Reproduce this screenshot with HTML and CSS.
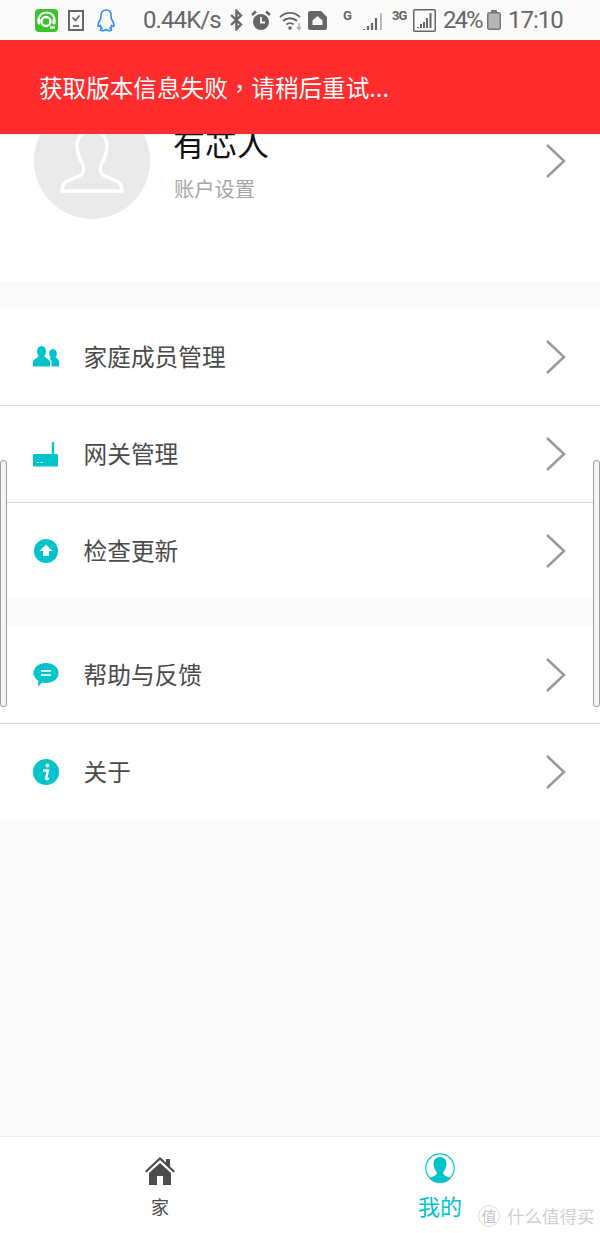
FILE: index.html
```html
<!DOCTYPE html>
<html lang="zh-CN">
<head>
    <meta charset="UTF-8">
    <meta name="viewport" content="width=device-width, initial-scale=1.0">
    <title>我的</title>
    <link rel="stylesheet" href="styles.css">
</head>
<body>
<div class="page">
    <!-- phone status bar -->
    <div class="status">
        <svg class="st-app" width="23" height="23" viewBox="0 0 23 23"><rect width="23" height="23" rx="4" fill="#38c52b"/><path d="M3.500 12.500C3 7 6.500 3.500 11.500 3.500s8.500 3.500 8 9" fill="none" stroke="#fff" stroke-width="2"/><rect x="2.500" y="9.500" width="3" height="6" rx="1.500" fill="#fff"/><rect x="17.500" y="9.500" width="3" height="6" rx="1.500" fill="#fff"/><circle cx="11" cy="12.500" r="4.500" fill="none" stroke="#fff" stroke-width="2.400"/><path d="M15 18.500h5" stroke="#fff" stroke-width="2.400"/></svg>
        <svg class="st-task" width="16" height="21" viewBox="0 0 16 21"><rect x="1" y="1" width="14" height="19" fill="none" stroke="#666" stroke-width="2"/><path d="M4.500 7.500l3 3 4-5" fill="none" stroke="#666" stroke-width="1.600"/><path d="M5 16h6" stroke="#666" stroke-width="1.800"/></svg>
        <svg class="st-qq" width="18" height="23" viewBox="0 0 18 23"><path d="M9 1C5.500 1 3.800 3.800 3.800 7v2.500C2.300 11.500 1 14 1 16.500c0 1.300.8 1.500 2.400.2.300 1 .9 1.800 1.600 2.400-1.400.6-1.800 1.300-1.400 2 .9.900 4 .6 5.400-.5 1.400 1.100 4.500 1.400 5.400.5.400-.7 0-1.400-1.400-2 .7-.6 1.300-1.400 1.600-2.400 1.600 1.300 2.400 1.100 2.400-.2 0-2.500-1.300-5-2.800-7V7C14.200 3.800 12.500 1 9 1z" fill="none" stroke="#2f8ef0" stroke-width="1.600"/></svg>
        <span class="st-speed">0.44K/s</span>
        <svg class="st-bt" width="15" height="22" viewBox="0 0 15 22"><path d="M2 6l10 9.500L7.500 20V2L12 6.500 2 16" fill="none" stroke="#666" stroke-width="2.400"/></svg>
        <svg class="st-alarm" width="20" height="21" viewBox="0 0 20 21"><circle cx="10" cy="12" r="8" fill="#666"/><path d="M10 7v5.500h4" fill="none" stroke="#fafafa" stroke-width="1.800"/><path d="M1 5l4-3.500M19 5l-4-3.500" stroke="#666" stroke-width="2.600"/></svg>
        <svg class="st-wifi" width="24" height="21" viewBox="0 0 24 21"><path d="M1 7c6-5.500 14-5.500 20 0M4 11c4-3.700 10-3.700 14 0M7.500 14.500c2-1.800 5-1.800 7 0" fill="none" stroke="#666" stroke-width="1.900"/><circle cx="11" cy="18" r="1.800" fill="#666"/><path d="M20 13v6M18 17l2 2.500 2-2.500" fill="none" stroke="#aaa" stroke-width="1.300"/></svg>
        <svg class="st-sim" width="19" height="19" viewBox="0 0 19 19"><path d="M2 0h11l6 6v11a2 2 0 0 1-2 2H2a2 2 0 0 1-2-2V2a2 2 0 0 1 2-2z" fill="#666"/><path d="M9.500 5L4.500 9.500V14h10V9.500z" fill="#fafafa"/></svg>
        <span class="st-net st-g">G</span>
        <svg class="st-sig" width="20" height="18" viewBox="0 0 20 18"><path d="M1 17v-1M5 17v-4M9 17v-7M13 17V5" stroke="#666" stroke-width="2.200"/><path d="M18 17V0" stroke="#bbb" stroke-width="2"/></svg>
        <span class="st-net st-3g">3G</span>
        <svg class="st-sigbox" width="23" height="23" viewBox="0 0 23 23"><rect x=".75" y=".75" width="21.500" height="21.500" rx="1" fill="none" stroke="#666" stroke-width="1.500"/><path d="M5 19v-1M8 19v-4M11 19v-6M14 19V9M17.500 19V4" stroke="#666" stroke-width="2"/></svg>
        <span class="st-batt">24%</span>
        <svg class="st-battery" width="14" height="20" viewBox="0 0 14 20"><path d="M4 0h6v2H4z" fill="#777"/><rect x=".75" y="2.750" width="12.500" height="16.500" rx="1.500" fill="#b5b5b5" stroke="#777" stroke-width="1.500"/></svg>
        <span class="st-time">17:10</span>
    </div>

    <!-- toast sits over the profile block -->
    <div class="toast">获取版本信息失败<span class="comma" lang="zh-TW">，</span>请稍后重试...</div>

    <div class="profile">
        <div class="avatar">
            <svg width="64" height="64" viewBox="0 0 64 64"><path d="M32 2C23 2 17 8 17 17C17 24 19 28 21 32C24 37 25 43 21 46C16 49 10 50 6 53C3 55 2 58 2 62H62C62 58 61 55 58 53C54 50 48 49 43 46C39 43 40 37 43 32C45 28 47 24 47 17C47 8 41 2 32 2Z" fill="none" stroke="#fff" stroke-width="3.400"/></svg>
        </div>
        <div class="info">
            <div class="name">有芯人</div>
            <div class="sub">账户设置</div>
        </div>
        <svg class="arrow" width="22" height="36" viewBox="0 0 22 36"><path d="M2 2l17 16L2 34" fill="none" stroke="#999" stroke-width="2.500"/></svg>
    </div>

    <div class="group">
        <div class="row">
            <svg class="ico" width="26" height="21" viewBox="0 0 26 21"><ellipse cx="8.500" cy="5.500" rx="4.500" ry="5.500" fill="#00c4cc"/><path d="M0 20.500V16C0 13 5 12.500 6 9.500H11C12 12.500 17 13 17 16V20.500z" fill="#00c4cc"/><ellipse cx="20" cy="7.500" rx="3.800" ry="4.500" fill="#00c4cc"/><path d="M18.500 20.500V15.500C18.500 14 17.500 13.500 16 12.500C17.500 12.500 18 11 18 10.500H22.500C23 12.500 26 13 26 15.500V20.500z" fill="#00c4cc"/></svg>
            <span class="label">家庭成员管理</span>
            <svg class="arrow" width="22" height="36" viewBox="0 0 22 36"><path d="M2 2l17 16L2 34" fill="none" stroke="#999" stroke-width="2.500"/></svg>
        </div>
        <div class="row">
            <svg class="ico" width="26" height="25" viewBox="0 0 26 25"><rect x="18.800" width="2.400" height="13" rx="1" fill="#00c4cc"/><rect y="12" width="25" height="12.500" rx="1" fill="#00c4cc"/><path d="M4 20.500h2M7.500 20.500h2" stroke="#fff" stroke-width="1.200"/></svg>
            <span class="label">网关管理</span>
            <svg class="arrow" width="22" height="36" viewBox="0 0 22 36"><path d="M2 2l17 16L2 34" fill="none" stroke="#999" stroke-width="2.500"/></svg>
        </div>
        <div class="row">
            <svg class="ico" width="26" height="24" viewBox="0 0 26 24"><circle cx="13" cy="12" r="12" fill="#00c4cc"/><path d="M13 5.500l6.500 6.500h-3.500v5h-6v-5H6.500z" fill="#fff"/></svg>
            <span class="label">检查更新</span>
            <svg class="arrow" width="22" height="36" viewBox="0 0 22 36"><path d="M2 2l17 16L2 34" fill="none" stroke="#999" stroke-width="2.500"/></svg>
        </div>
    </div>

    <div class="group">
        <div class="row">
            <svg class="ico" width="26" height="24" viewBox="0 0 26 24"><path d="M13 0c7 0 12.500 4.300 12.500 10S20 20 13 20c-1.500 0-3-.2-4-.5L5 24l.5-6C2.500 16 .5 13.300.5 10 .5 4.300 6 0 13 0z" fill="#00c4cc"/><path d="M8 7.800h10M8 12.200h10" stroke="#fff" stroke-width="1.800"/></svg>
            <span class="label">帮助与反馈</span>
            <svg class="arrow" width="22" height="36" viewBox="0 0 22 36"><path d="M2 2l17 16L2 34" fill="none" stroke="#999" stroke-width="2.500"/></svg>
        </div>
        <div class="row">
            <svg class="ico" width="26" height="26" viewBox="0 0 26 26"><circle cx="13" cy="13" r="13" fill="#00c4cc"/><circle cx="14.500" cy="6.500" r="2" fill="#fff"/><path d="M10 11.500h5l-2 8c0 1 1.500 1 3-.5" fill="none" stroke="#fff" stroke-width="2.400"/></svg>
            <span class="label">关于</span>
            <svg class="arrow" width="22" height="36" viewBox="0 0 22 36"><path d="M2 2l17 16L2 34" fill="none" stroke="#999" stroke-width="2.500"/></svg>
        </div>
    </div>

    <div class="tabs">
        <div class="tab">
            <svg width="30" height="30" viewBox="0 0 30 30"><path d="M0 15L15 1l6 5.500V3h4v7.500l5 4.500-1.500 1.500L15 4 1.500 16.500z" fill="#4c4c4c"/><path d="M4 17L15 7l11 10v12h-8v-9h-6v9H4z" fill="#4c4c4c"/></svg>
            <span class="tab-text">家</span>
        </div>
        <div class="tab active">
            <svg width="30" height="30" viewBox="0 0 30 30"><circle cx="15" cy="15" r="14.200" fill="#fff" stroke="#00c4cc" stroke-width="1.200"/><path d="M15 4c-4 0-6.500 3-6.500 7 0 3 1.500 6 3 8 1 1.500-.5 3-2.500 4-2 1-3.500 1.500-4.500 2.500a14 14 0 0 0 21 0c-1-1-2.500-1.500-4.500-2.500-2-1-3.500-2.500-2.500-4 1.500-2 3-5 3-8 0-4-2.500-7-6.500-7z" fill="#00c4cc"/></svg>
            <span class="tab-text">我的</span>
        </div>
    </div>

    <!-- overlays: scroll handles and image watermark -->
    <div class="handle handle-l"></div>
    <div class="handle handle-r"></div>
    <div class="mark">
        <span class="mark-logo">值</span>
        <span class="mark-text">什么值得买</span>
    </div>
</div>
</body>
</html>
```

FILE: styles.css
```css
html, body {
    margin: 0;
    padding: 0;
}

body {
    font-family: "Noto Sans CJK SC", "Noto Sans", sans-serif;
    background: #fafafa;
}

.page {
    position: relative;
    width: 600px;
    height: 1233px;
    overflow: hidden;
    display: flex;
    flex-direction: column;
    background: #fafafa;
}

/* status bar */
.status {
    height: 40px;
    flex: none;
    display: flex;
    align-items: center;
    padding-left: 35px;
    font-family: Roboto, sans-serif;
    color: #666;
    background: #fafafa;
}

.st-task { margin-left: 10px; }
.st-qq { margin-left: 13px; }
.st-speed { margin-left: 28px; font-size: 24px; width: 78px; white-space: nowrap; letter-spacing: -.9px; }
.st-bt { margin-left: 8px; }
.st-alarm { margin-left: 7px; }
.st-wifi { margin-left: 8px; }
.st-sim { margin-left: 5px; }
.st-net { font-size: 13px; font-weight: bold; align-self: flex-start; margin-top: 9px; line-height: 14px; }
.st-g { margin-left: 16px; width: 9px; }
.st-sig { margin-left: 11px; margin-top: 3px; }
.st-3g { margin-left: 9px; width: 15px; white-space: nowrap; letter-spacing: -1px; }
.st-sigbox { margin-left: 6px; }
.st-batt { margin-left: 7px; font-size: 24px; width: 39px; letter-spacing: -2px; white-space: nowrap; }
.st-battery { margin-left: 5px; }
.st-time { margin-left: 7px; font-size: 24px; letter-spacing: -1px; }

/* red toast */
.toast {
    position: absolute;
    left: 0;
    top: 40px;
    width: 561px;
    height: 94px;
    padding-left: 39px;
    line-height: 94px;
    font-size: 23.600px;
    color: #fff;
    background: #ff2d2d;
}

.comma {
    font-family: "Noto Sans CJK TC", sans-serif;
}

/* profile */
.profile {
    flex: none;
    height: 241px;
    box-sizing: border-box;
    padding: 63px 34px 0;
    display: flex;
    align-items: flex-start;
    background: #fff;
}

.avatar {
    width: 116px;
    height: 116px;
    border-radius: 50%;
    background: #eaeaea;
    display: flex;
    align-items: center;
    justify-content: center;
    flex: none;
}

.info {
    margin-left: 24px;
    margin-top: 19px;
    flex: 1;
}

.name {
    font-size: 32px;
    line-height: 40px;
    margin-left: -1px;
    color: #111;
}

.sub {
    margin-top: 12px;
    font-size: 20.300px;
    line-height: 28px;
    color: #a6a6a6;
}

.profile .arrow {
    margin-top: 40px;
    margin-right: -1px;
}

/* list */
.group {
    flex: none;
    margin-top: 27px;
    background: #fff;
}

.row {
    height: 97px;
    box-sizing: border-box;
    display: flex;
    align-items: center;
    padding: 0 33px;
    border-top: 1px solid #d5d5d5;
}

.row:first-child {
    border-top: none;
}

.ico {
    flex: none;
}

.label {
    flex: 1;
    margin-left: 24.500px;
    padding-bottom: 2px;
    font-size: 23.700px;
    color: #4a4a4a;
}

/* bottom tabs */
.tabs {
    margin-top: auto;
    height: 97px;
    flex: none;
    display: flex;
    padding: 0 20px;
    background: #fff;
    border-top: 1px solid #f0f0f0;
    box-sizing: border-box;
}

.tab {
    flex: 1;
    display: flex;
    flex-direction: column;
    align-items: center;
    padding-top: 19px;
    color: #4a4a4a;
}

.tab-text {
    margin-top: 7px;
    font-size: 18px;
    line-height: 26px;
}

.tab.active {
    color: #00c4cc;
    padding-top: 16px;
}

.tab.active .tab-text {
    font-size: 22px;
    line-height: 30px;
    margin-top: 7px;
}

/* scroll handles */
.handle {
    position: absolute;
    top: 460px;
    width: 5px;
    height: 245px;
    background: #f4f4f4;
    border: 1px solid #a0a0a0;
    border-radius: 3px;
}

.handle-l { left: 0; }
.handle-r { right: 0; }

/* watermark */
.mark {
    position: absolute;
    left: 478px;
    top: 1204px;
    display: flex;
    align-items: center;
    color: #d0d0d0;
}

.mark-logo {
    width: 20px;
    height: 20px;
    border: 1px solid #ddd;
    border-radius: 50%;
    background: #fff;
    text-align: center;
    font-size: 15px;
    line-height: 20px;
    color: #c4c4c4;
}

.mark-text {
    margin-left: 7px;
    font-size: 17.500px;
    line-height: 24px;
}
```
